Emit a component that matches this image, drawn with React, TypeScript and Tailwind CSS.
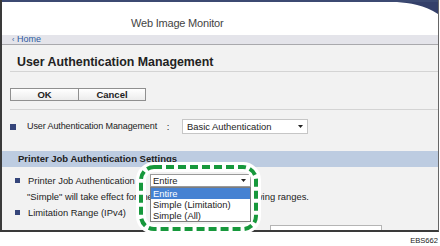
const Arrow = () => (
  <svg width="5" height="3" viewBox="0 0 5 3" className="shrink-0">
    <path d="M0 0H5L2.5 3Z" fill="#222" />
  </svg>
);

const Bullet = ({ big }: { big?: boolean }) => (
  <span className={`shrink-0 bg-[#35457a] ${big ? 'w-[6px] h-[6px]' : 'w-[5px] h-[5px]'}`} />
);

export default function App() {
  return (
    <div className="relative w-[440px] h-[246px] overflow-hidden bg-white font-['Liberation_Sans',Arial,sans-serif] text-[#222]">
      <div className="w-[439px] h-[232px] overflow-hidden flex flex-col border-l-2 border-r border-b-2 border-l-[#3a3a3a] border-r-[#666] border-b-[#3a3a3a]">
        {/* Header */}
        <header className="relative h-[35px] shrink-0 border-t-2 border-t-[#3c4a72] bg-white pl-[129px] pt-[15px]">
          <span className="block text-[11px] leading-[13px] tracking-[-0.2px] text-[#444]">Web Image Monitor</span>
          <svg className="absolute right-0 top-0" width="41" height="13" viewBox="0 0 41 13">
            <path d="M0 0C12 1 28 3 41 12V0Z" fill="#34406a" />
          </svg>
        </header>

        {/* Breadcrumb */}
        <div className="h-[10px] shrink-0 flex items-center pl-[10px] bg-[#e4e4ea] border-b border-[#a9a9ad] text-[#2d5aa0] text-[9px] leading-[9px]">
          <span className="w-[5px] text-[7px]">‹</span>
          <span>Home</span>
        </div>

        {/* Content */}
        <div className="flex-1 flex flex-col bg-[#f2f2f2]">
          <h1 className="pl-[15px] pt-[10px] text-[12.4px] leading-[14px] font-bold text-[#222]">
            User Authentication Management
          </h1>
          <div className="mt-[2px] ml-[8px] h-px bg-[#d4d4d4]" />

          <div className="flex pl-[8px] pt-[16px]">
            <button className="w-[69px] h-[13px] border border-[#8f8f8f] bg-gradient-to-b from-white to-[#ececec] text-[9.5px] leading-[11px] font-bold">
              OK
            </button>
            <button className="-ml-px w-[68px] h-[13px] border border-[#8f8f8f] bg-gradient-to-b from-white to-[#ececec] text-[9.5px] leading-[11px] font-bold">
              Cancel
            </button>
          </div>
          <div className="mt-[8px] ml-[8px] h-px bg-[#d4d4d4]" />

          <div className="flex items-center pl-[8px] pt-[9px] text-[9.4px] leading-[11px]">
            <Bullet big />
            <span className="ml-[11px] w-[136px] shrink-0 whitespace-nowrap text-[9px] tracking-[-0.1px]">User Authentication Management</span>
            <span className="w-[10px] text-center">:</span>
            <div className="ml-[9px] w-[126px] h-[15px] flex items-center justify-between pl-[4px] pr-[4px] bg-white border border-[#c6c6c6]">
              <span>Basic Authentication</span>
              <Arrow />
            </div>
          </div>

          {/* Section band */}
          <div className="mt-[17px] h-[16px] shrink-0 flex items-center pl-[16px] bg-[#bdcce1] text-[9.5px] font-bold">
            Printer Job Authentication Settings
          </div>

          <div className="pt-[5px] flex flex-col text-[9.4px] leading-[11px] whitespace-nowrap">
            <div className="h-[16px] flex items-center pl-[13px]">
              <Bullet />
              <span className="ml-[8px] w-[122px] shrink-0">Printer Job Authentication</span>
              <div className="relative w-[101px] h-[13px]">
                <div className="h-full flex items-center justify-between pl-[2px] pr-[4px] bg-white border border-[#9a9a9a]">
                  <span>Entire</span>
                  <Arrow />
                </div>
                <ul className="absolute left-0 top-full z-10 w-full bg-white border border-[#7d7d7d]">
                  <li className="h-[11px] pl-[2px] bg-[#4682d2] text-white">Entire</li>
                  <li className="h-[11px] pl-[2px]">Simple (Limitation)</li>
                  <li className="h-[11px] pl-[2px]">Simple (All)</li>
                </ul>
              </div>
            </div>
            <div className="h-[16px] flex items-center pl-[25px]">
              "Simple" will take effect for the IP addresses of the following ranges.
            </div>
            <div className="h-[16px] flex items-center pl-[13px]">
              <Bullet />
              <span className="ml-[8px]">Limitation Range (IPv4)</span>
            </div>
            <div className="h-[26px] flex items-center pl-[30px]">
              <span className="w-[238px] shrink-0">IPv4 Address 1</span>
              <div className="w-[112px] h-[16px] flex items-center pl-[4px] bg-white border border-[#b5b5b5] text-[#888]">
                0.0.0.0
              </div>
            </div>
          </div>
        </div>
      </div>

      <div className="mt-[5px] pr-[2px] text-right text-[7.6px] leading-[8px] text-[#222]">EBS662</div>

      {/* Callout */}
      <svg className="absolute left-[133px] top-[159px]" width="131" height="78" viewBox="0 0 131 78" fill="none">
        <rect x="8" y="8" width="115" height="62" rx="13" stroke="#fff" strokeWidth="10" />
        <rect x="8" y="8" width="115" height="62" rx="13" stroke="#17983c" strokeWidth="4" strokeDasharray="8 4" />
      </svg>
    </div>
  );
}
